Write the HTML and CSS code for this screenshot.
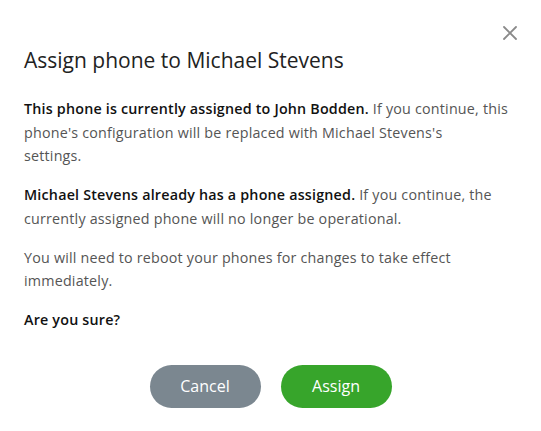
FILE: index.html
```html
<!DOCTYPE html>
<html lang="en">
<head>
  <meta charset="UTF-8">
  <title>Assign phone</title>
  <link rel="stylesheet" href="styles.css">
</head>
<body>

<div class="modal">
  <div class="modal-top">
    <a href="javascript:void(0)" class="close" aria-label="Close">
      <svg width="14" height="14" viewBox="0 0 14 14">
        <path d="M1 1L13 13M13 1L1 13" stroke="#8a8a8a" stroke-width="1.8" stroke-linecap="round"/>
      </svg>
    </a>
  </div>

  <h2 class="title">Assign phone to Michael Stevens</h2>

  <div class="body">
    <p><b>This phone is currently assigned to John Bodden.</b> If you continue, this phone's configuration will be replaced with Michael Stevens's<br>settings.</p>
    <p><b>Michael Stevens already has a phone assigned.</b> If you continue, the currently assigned phone will no longer be operational.</p>
    <p>You will need to reboot your phones for changes to take effect immediately.</p>
    <p><b>Are you sure?</b></p>
  </div>

  <div class="actions">
    <a href="javascript:void(0)" class="btn cancel">Cancel</a>
    <a href="javascript:void(0)" class="btn assign">Assign</a>
  </div>
</div>

</body>
</html>
```

FILE: styles.css
```css
* {
  margin: 0;
  padding: 0;
  box-sizing: border-box;
}

body {
  background-color: #fff;
  font-family: "Open Sans", "Noto Sans", sans-serif;
}

.modal {
  width: 541px;
  padding: 0 24px;
}

.modal-top {
  display: flex;
  justify-content: flex-end;
  padding: 23px 0 0;
}

.close {
  display: block;
  width: 14px;
  height: 14px;
}

.title {
  font-weight: 400;
  font-size: 21px;
  line-height: 28px;
  color: #222;
  margin-top: 9px;
}

.body {
  margin-top: 23px;
  font-size: 14.3px;
  letter-spacing: 0.2px;
  line-height: 23.5px;
  color: #555;
}

.body p {
  margin-bottom: 15.5px;
}

.body b {
  color: #111;
  font-weight: 600;
}

.actions {
  display: flex;
  justify-content: center;
  gap: 20px;
  margin-top: 33px;
}

.btn {
  width: 111px;
  height: 43px;
  border-radius: 22px;
  text-decoration: none;
  color: #fff;
  text-align: center;
  font-size: 16px;
  line-height: 43px;
}

.cancel {
  background-color: #7b8790;
}

.assign {
  background-color: #37a52b;
}
```
